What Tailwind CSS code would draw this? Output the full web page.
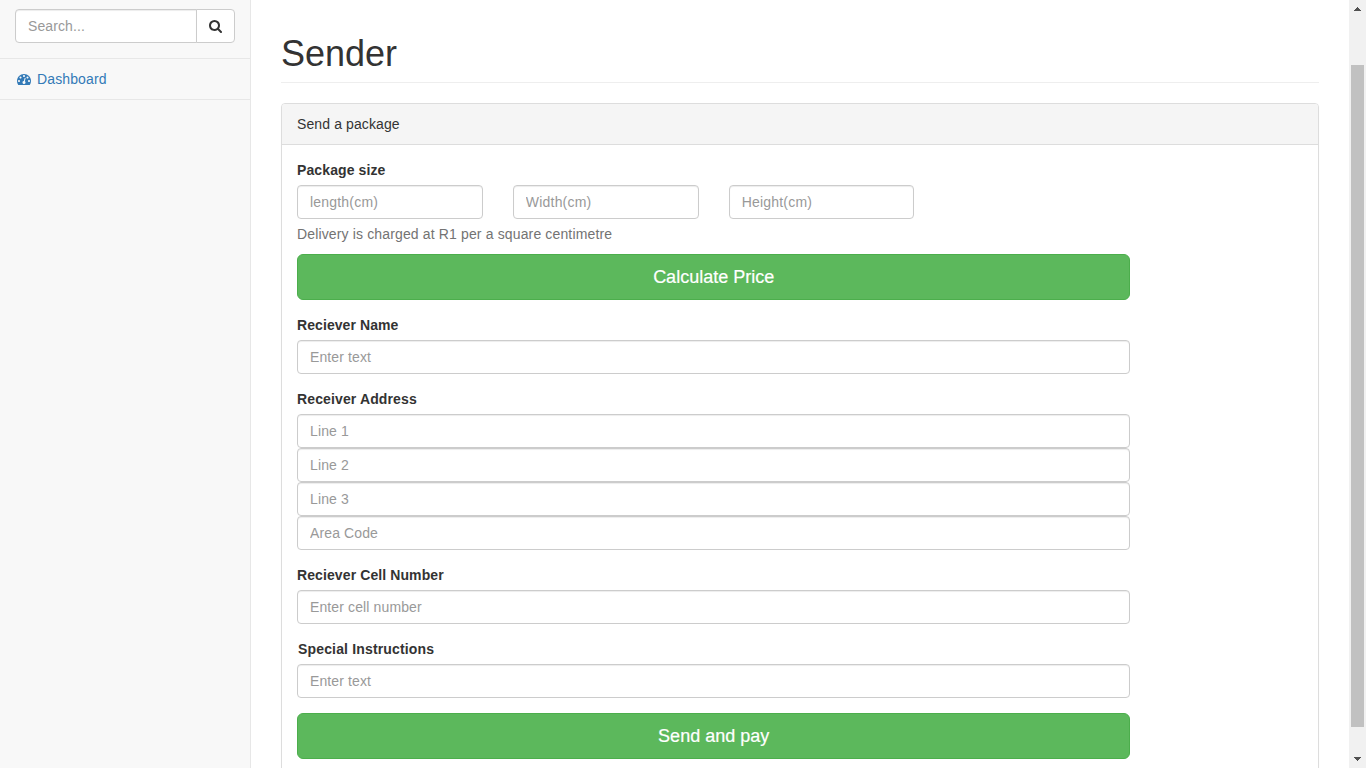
<!DOCTYPE html>
<html lang="en">
<head>
<meta charset="utf-8">
<title>Sender</title>
<script src="https://cdn.jsdelivr.net/npm/@tailwindcss/browser@4"></script>
</head>
<body class="flex h-screen overflow-hidden bg-white font-['Liberation_Sans',Arial,sans-serif] text-sm leading-5 text-[#333]">

<aside class="w-[251px] shrink-0 border-r border-[#e7e7e7] bg-[#f8f8f8]">
  <div class="flex border-b border-[#e7e7e7] px-[15px] pt-[9px] pb-[15px]">
    <input type="text" placeholder="Search..." class="h-[34px] w-[182px] rounded-l border border-[#ccc] bg-white px-3 tracking-[0.1px] shadow-[inset_0_1px_1px_rgba(0,0,0,0.075)] placeholder:text-[#999]">
    <button class="-ml-px flex h-[34px] w-[39px] items-start justify-center rounded-r border border-[#ccc] bg-white pt-2.5">
      <svg class="size-[13px]" viewBox="64 128 1664 1664" fill="#333"><path d="M1216 832q0-185-131.5-316.5t-316.5-131.5-316.5 131.5-131.5 316.5 131.5 316.5 316.5 131.5 316.5-131.5 131.5-316.5zm512 832q0 52-38 90t-90 38q-54 0-90-38l-343-342q-179 124-399 124-143 0-273.5-55.5t-225-150-150-225-55.5-273.5 55.5-273.5 150-225 225-150 273.5-55.5 273.5 55.5 225 150 150 225 55.5 273.5q0 220-124 399l343 343q37 37 37 90z"/></svg>
    </button>
  </div>
  <a href="#" class="flex items-center gap-1.5 border-b border-[#e7e7e7] px-[17px] py-2.5 tracking-[0.13px] text-[#337ab7]">
    <svg class="size-[14px]" viewBox="0 0 1792 1792" fill="currentColor"><path d="M384 1152q0-53-37.5-90.5t-90.5-37.5-90.5 37.5-37.5 90.5 37.5 90.5 90.5 37.5 90.5-37.5 37.5-90.5zm192-448q0-53-37.5-90.5t-90.5-37.5-90.5 37.5-37.5 90.5 37.5 90.5 90.5 37.5 90.5-37.5 37.5-90.5zm428 481l101-382q6-26-7.5-48.5t-38.5-29.5-48 6.5-30 39.5l-101 382q-60 5-107 43.5t-63 98.5q-20 77 20 146t117 89 146-20 89-117q16-60-6-117t-72-91zm660-33q0-53-37.5-90.5t-90.5-37.5-90.5 37.5-37.5 90.5 37.5 90.5 90.5 37.5 90.5-37.5 37.5-90.5zm-640-640q0-53-37.5-90.5t-90.5-37.5-90.5 37.5-37.5 90.5 37.5 90.5 90.5 37.5 90.5-37.5 37.5-90.5zm448 192q0-53-37.5-90.5t-90.5-37.5-90.5 37.5-37.5 90.5 37.5 90.5 90.5 37.5 90.5-37.5 37.5-90.5zm320 448q0 261-141 483-19 29-54 29h-1402q-35 0-54-29-141-221-141-483 0-182 71-348t191-286 286-191 348-71 348 71 286 191 191 286 71 348z"/></svg>
    Dashboard
  </a>
</aside>

<main class="min-w-0 flex-1 px-[30px]">
  <h1 class="mt-[34px] mb-5 border-b border-[#eee] pb-[9px] text-4xl leading-[39px] font-normal">Sender</h1>

  <section class="h-[700px] rounded border border-[#ddd] shadow-[0_1px_1px_rgba(0,0,0,0.05)]">
    <div class="rounded-t-[3px] border-b border-[#ddd] bg-[#f5f5f5] px-[15px] py-2.5 tracking-[0.11px]">Send a package</div>
    <form class="w-[863.33px] p-[15px]">
      <label class="mb-[5px] block font-bold tracking-[0.11px]">Package size</label>
      <div class="flex gap-[30px]">
        <input type="text" placeholder="length(cm)" class="h-[34px] w-[185.83px] rounded border border-[#ccc] px-3 tracking-[0.2px] shadow-[inset_0_1px_1px_rgba(0,0,0,0.075)] placeholder:text-[#999]">
        <input type="text" placeholder="Width(cm)" class="h-[34px] w-[185.83px] rounded border border-[#ccc] px-3 tracking-[0.2px] shadow-[inset_0_1px_1px_rgba(0,0,0,0.075)] placeholder:text-[#999]">
        <input type="text" placeholder="Height(cm)" class="h-[34px] w-[185.83px] rounded border border-[#ccc] px-3 tracking-[0.2px] shadow-[inset_0_1px_1px_rgba(0,0,0,0.075)] placeholder:text-[#999]">
      </div>
      <p class="mt-[5px] mb-2.5 tracking-[0.143px] text-[#737373]">Delivery is charged at R1 per a square centimetre</p>
      <button type="button" class="mb-[15px] block h-[46px] w-full rounded-md border border-[#4cae4c] bg-[#5cb85c] text-lg leading-6 text-white [-webkit-text-stroke:0.2px_white]">Calculate Price</button>

      <label class="mb-[5px] block font-bold tracking-[0.08px]">Reciever Name</label>
      <input type="text" placeholder="Enter text" class="mb-[15px] block h-[34px] w-full rounded border border-[#ccc] px-3 tracking-[0.12px] shadow-[inset_0_1px_1px_rgba(0,0,0,0.075)] placeholder:text-[#999]">

      <label class="mb-[5px] block font-bold tracking-[0.13px]">Receiver Address</label>
      <input type="text" placeholder="Line 1" class="block h-[34px] w-full rounded border border-[#ccc] px-3 tracking-[0.12px] shadow-[inset_0_1px_1px_rgba(0,0,0,0.075)] placeholder:text-[#999]">
      <input type="text" placeholder="Line 2" class="block h-[34px] w-full rounded border border-[#ccc] px-3 tracking-[0.12px] shadow-[inset_0_1px_1px_rgba(0,0,0,0.075)] placeholder:text-[#999]">
      <input type="text" placeholder="Line 3" class="block h-[34px] w-full rounded border border-[#ccc] px-3 tracking-[0.12px] shadow-[inset_0_1px_1px_rgba(0,0,0,0.075)] placeholder:text-[#999]">
      <input type="text" placeholder="Area Code" class="mb-[15px] block h-[34px] w-full rounded border border-[#ccc] px-3 tracking-[0.12px] shadow-[inset_0_1px_1px_rgba(0,0,0,0.075)] placeholder:text-[#999]">

      <label class="mb-[5px] block font-bold tracking-[0.1px]">Reciever Cell Number</label>
      <input type="text" placeholder="Enter cell number" class="mb-[15px] block h-[34px] w-full rounded border border-[#ccc] px-3 tracking-[0.12px] shadow-[inset_0_1px_1px_rgba(0,0,0,0.075)] placeholder:text-[#999]">

      <label class="mb-[5px] block pl-px font-bold tracking-[0.16px]">Special Instructions</label>
      <input type="text" placeholder="Enter text" class="mb-[15px] block h-[34px] w-full rounded border border-[#ccc] px-3 tracking-[0.12px] shadow-[inset_0_1px_1px_rgba(0,0,0,0.075)] placeholder:text-[#999]">

      <button type="button" class="block h-[46px] w-full rounded-md border border-[#4cae4c] bg-[#5cb85c] text-lg leading-6 text-white [-webkit-text-stroke:0.2px_white]">Send and pay</button>
    </form>
  </section>
</main>

<!-- Page scrollbar -->
<div class="flex h-screen w-[17px] shrink-0 flex-col items-center bg-[#f1f1f1]">
  <svg class="mt-[7px] h-1 w-[7px]" viewBox="0 0 7 4" fill="#505050" shape-rendering="crispEdges"><path d="M3 0h1v1h1v1h1v1h1v1H0V3h1V2h1V1h1z"/></svg>
  <div class="mt-[54px] h-[662px] w-[13px] bg-[#c1c1c1]"></div>
  <svg class="mt-[30px] h-1 w-[7px]" viewBox="0 0 7 4" fill="#505050" shape-rendering="crispEdges"><path d="M0 0h7v1H6v1H5v1H4v1H3V3H2V2H1V1H0z"/></svg>
</div>
</body>
</html>
